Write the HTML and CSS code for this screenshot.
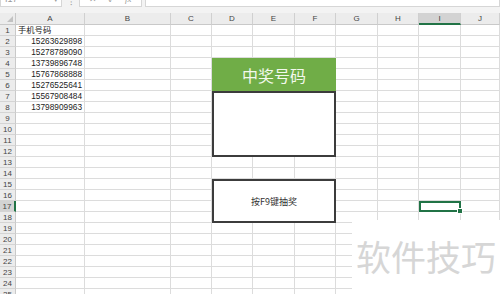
FILE: index.html
```html
<!DOCTYPE html>
<html lang="zh">
<head>
  <meta charset="UTF-8" />
  <meta name="viewport" content="width=device-width, initial-scale=1.0"/>
  <title>抽奖</title>
  <link rel="stylesheet" href="styles.css">
</head>
<body>

  <div class="toolbar">
    <div class="name-box">I17<span class="arrow">▾</span></div>
    <div class="dots">⁝</div>
    <div class="fx-box">
      <span>✕</span><span>✓</span><span class="fx">fx</span>
    </div>
    <div class="formula-box"></div>
  </div>

  <div id="sheet" class="sheet">
    <!-- merged cells, the rest is filled in by the script -->
    <div class="merged prize-title">中奖号码</div>
    <div class="merged prize-result"></div>
    <div class="merged prize-hint">按F9键抽奖</div>
  </div>

  <div class="watermark">软件技巧</div>

  <script>
    const cols = ["A", "B", "C", "D", "E", "F", "G", "H", "I", "J"];
    const rowCount = 25;
    const data = {
      1: "手机号码",
      2: "15263629898",
      3: "15278789090",
      4: "13739896748",
      5: "15767868888",
      6: "15276525641",
      7: "15567908484",
      8: "13798909963"
    };
    const selected = { row: 17, col: 8 };

    function inMerged(r, c) {
      if (c < 3 || c > 5) return false;
      return (r >= 4 && r <= 12) || (r >= 15 && r <= 18);
    }

    function buildSheet() {
      const sheet = document.getElementById("sheet");

      const corner = document.createElement("div");
      corner.className = "corner";
      sheet.appendChild(corner);

      cols.forEach((name, i) => {
        const head = document.createElement("div");
        head.className = "col-head" + (i === selected.col ? " active" : "");
        head.textContent = name;
        sheet.appendChild(head);
      });

      for (let r = 1; r <= rowCount; r++) {
        const head = document.createElement("div");
        head.className = "row-head" + (r === selected.row ? " active" : "");
        head.textContent = r;
        sheet.appendChild(head);

        cols.forEach((name, c) => {
          if (inMerged(r, c)) return;
          const cell = document.createElement("div");
          cell.className = "cell";
          if (c === 0 && data[r]) {
            cell.textContent = data[r];
            cell.classList.add(r === 1 ? "text" : "number");
          }
          if (r === selected.row && c === selected.col) {
            cell.classList.add("selected");
          }
          sheet.appendChild(cell);
        });
      }
    }

    buildSheet();
  </script>

</body>
</html>
```

FILE: styles.css
```css
body {
  margin: 0;
  width: 500px;
  height: 294px;
  overflow: hidden;
  position: relative;
  background: #fff;
  font-family: "Liberation Sans", "Noto Sans CJK SC", sans-serif;
}

.toolbar {
  height: 13px;
  box-sizing: border-box;
  padding-bottom: 6px;
  background: #f3f3f3;
  display: flex;
  align-items: flex-end;
  overflow: hidden;
  color: #9a9a9a;
  font-size: 9px;
}

.name-box {
  width: 62px;
  height: 16px;
  box-sizing: border-box;
  background: #fff;
  border: 1px solid #d6d6d6;
  display: flex;
  justify-content: space-between;
  align-items: center;
  padding: 0 3px 0 4px;
  line-height: 1;
}

.arrow {
  font-size: 7px;
}

.dots {
  width: 17px;
  text-align: center;
  line-height: 1;
}

.fx-box {
  width: 63px;
  height: 16px;
  box-sizing: border-box;
  background: #fff;
  border: 1px solid #d6d6d6;
  display: flex;
  justify-content: space-around;
  align-items: center;
  padding: 0 4px;
  line-height: 1;
}

.fx {
  font-style: italic;
  font-family: "Liberation Serif", serif;
}

.formula-box {
  flex: 1;
  height: 16px;
  margin-left: 3px;
  box-sizing: border-box;
  background: #fff;
  border: 1px solid #d6d6d6;
}

.sheet {
  display: grid;
  grid-template-columns: 16px 69px 86px 41px 41px 42px 41px 42px 41px 42px 1fr;
  grid-template-rows: 12px repeat(25, 11px);
  font-size: 8px;
}

.corner,
.col-head,
.row-head,
.cell {
  box-sizing: border-box;
  border-right: 1px solid #dcdcdc;
  border-bottom: 1px solid #dcdcdc;
  overflow: hidden;
  white-space: nowrap;
}

.corner {
  background: #ececec;
  border-right-color: #c9c9c9;
  border-bottom-color: #c9c9c9;
  position: relative;
}

.corner::after {
  content: "";
  position: absolute;
  right: 2px;
  bottom: 2px;
  border-left: 6px solid transparent;
  border-bottom: 6px solid #c2c2c2;
}

.col-head {
  background: #ececec;
  border-right-color: #d0d0d0;
  border-bottom-color: #c9c9c9;
  color: #444;
  text-align: center;
  line-height: 12px;
}

.row-head {
  background: #ececec;
  border-right-color: #c9c9c9;
  border-bottom-color: #d4d4d4;
  color: #444;
  text-align: center;
  line-height: 11px;
}

.col-head.active {
  background: #d3d3d3;
  border-bottom: 2px solid #217346;
}

.row-head.active {
  background: #d3d3d3;
  border-right: 2px solid #217346;
}

.cell {
  line-height: 10px;
  font-size: 8.3px;
  color: #222;
}

.cell.text {
  padding-left: 2px;
}

.cell.number {
  text-align: right;
  padding-right: 2px;
}

.cell.selected {
  border: 2px solid #217346;
  position: relative;
  overflow: visible;
}

.cell.selected::after {
  content: "";
  position: absolute;
  right: -4px;
  bottom: -4px;
  width: 4px;
  height: 4px;
  background: #217346;
  border: 1px solid #fff;
}

.merged {
  grid-column: 5 / 8;
  box-sizing: border-box;
  display: flex;
  align-items: center;
  justify-content: center;
  font-family: "Noto Sans CJK SC", sans-serif;
}

.prize-title {
  grid-row: 5 / 8;
  background: #70ad47;
  color: #f2f8ec;
  font-size: 16px;
}

.prize-result {
  grid-row: 8 / 14;
  background: #fff;
  border: 2px solid #3c3c3c;
}

.prize-hint {
  grid-row: 16 / 20;
  background: #fff;
  border: 2px solid #3c3c3c;
  color: #333;
  font-size: 9px;
}

.watermark {
  position: absolute;
  left: 352px;
  top: 220px;
  right: 0;
  bottom: 0;
  background: #fff;
  display: flex;
  align-items: center;
  justify-content: center;
  padding-bottom: 4px;
  box-sizing: border-box;
  font-family: "Noto Sans CJK SC", sans-serif;
  font-size: 35px;
  color: #d6d6d6;
  letter-spacing: 0;
}
```
